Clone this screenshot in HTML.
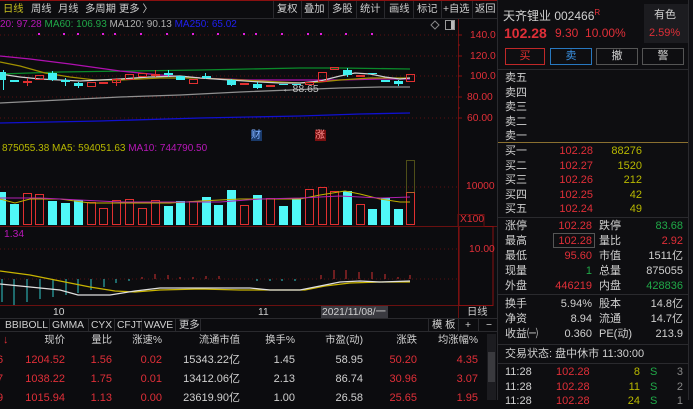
<!DOCTYPE html>
<html><head><meta charset="utf-8">
<style>
*{margin:0;padding:0;box-sizing:border-box}
body{width:693px;height:400px;background:#0c0c0f;overflow:hidden;position:relative;font-family:"Liberation Sans","Noto Sans CJK SC",sans-serif;font-size:11px;color:#d0d0d0}
.a{position:absolute;white-space:nowrap;line-height:13px}
.r{color:#e02f38}.g{color:#20a848}.y{color:#b8b800}.w{color:#d0d0d0}.m{color:#b818b8}
.rt{text-align:right}
.s{font-size:10.3px}
</style></head><body>
<svg class="a" style="left:0;top:0" width="498" height="400">
<rect x="0" y="0" width="498" height="18" fill="#0c0c0f"/>
<line x1="0" y1="0.5" x2="498" y2="0.5" stroke="#8a1010"/>
<line x1="0" y1="18.5" x2="498" y2="18.5" stroke="#2a2a2e"/>
<g stroke="#2a2a2e"><line x1="273.5" y1="1" x2="273.5" y2="18"/><line x1="301.5" y1="1" x2="301.5" y2="18"/><line x1="328.5" y1="1" x2="328.5" y2="18"/><line x1="356.5" y1="1" x2="356.5" y2="18"/><line x1="384.5" y1="1" x2="384.5" y2="18"/><line x1="413.5" y1="1" x2="413.5" y2="18"/><line x1="441.5" y1="1" x2="441.5" y2="18"/><line x1="472.5" y1="1" x2="472.5" y2="18"/></g>
<line x1="458.5" y1="19" x2="458.5" y2="318" stroke="#6a1010"/>
<g stroke="#5a1010" stroke-dasharray="1,3"><line x1="0" y1="35" x2="458" y2="35"/><line x1="0" y1="56" x2="458" y2="56"/><line x1="0" y1="76" x2="458" y2="76"/><line x1="0" y1="97" x2="458" y2="97"/><line x1="0" y1="118" x2="458" y2="118"/><line x1="0" y1="187" x2="458" y2="187"/><line x1="0" y1="249" x2="458" y2="249"/><line x1="0" y1="279" x2="458" y2="279"/></g>
<g stroke="#8a1010"><line x1="458" y1="35" x2="462" y2="35"/><line x1="458" y1="56" x2="462" y2="56"/><line x1="458" y1="76" x2="462" y2="76"/><line x1="458" y1="97" x2="462" y2="97"/><line x1="458" y1="118" x2="462" y2="118"/><line x1="458" y1="45" x2="460" y2="45"/><line x1="458" y1="66" x2="460" y2="66"/><line x1="458" y1="87" x2="460" y2="87"/><line x1="458" y1="108" x2="460" y2="108"/></g>
<line x1="0" y1="226.5" x2="498" y2="226.5" stroke="#6a1010"/>
<line x1="0" y1="305.5" x2="458" y2="305.5" stroke="#6a1010"/>
<rect x="459" y="226.5" width="34" height="79" fill="none" stroke="#8a1010"/>
<rect x="458" y="214.5" width="26" height="12" fill="none" stroke="#6a1010"/>
<line x1="0" y1="318.5" x2="498" y2="318.5" stroke="#2a2a2e"/>
<line x1="0" y1="331.5" x2="498" y2="331.5" stroke="#2a2a2e"/>
<g stroke="#2a2a2e"><line x1="49.5" y1="319" x2="49.5" y2="331"/><line x1="88.5" y1="319" x2="88.5" y2="331"/><line x1="114.5" y1="319" x2="114.5" y2="331"/><line x1="141.5" y1="319" x2="141.5" y2="331"/><line x1="175.5" y1="319" x2="175.5" y2="331"/><line x1="200.5" y1="319" x2="200.5" y2="331"/><line x1="428.5" y1="319" x2="428.5" y2="331"/><line x1="458.5" y1="319" x2="458.5" y2="331"/><line x1="478.5" y1="319" x2="478.5" y2="331"/></g>
<rect x="321" y="306" width="67" height="12" fill="#3a3a40"/>
<g fill="#e020e0"><rect x="38" y="33" width="2" height="2"/><rect x="63" y="33" width="2" height="2"/><rect x="77" y="33" width="2" height="2"/><rect x="102" y="33" width="2" height="2"/><rect x="114" y="33" width="2" height="2"/><rect x="140" y="33" width="2" height="2"/><rect x="166" y="33" width="2" height="2"/><rect x="192" y="33" width="2" height="2"/><rect x="217" y="33" width="2" height="2"/><rect x="243" y="33" width="2" height="2"/><rect x="255" y="33" width="2" height="2"/><rect x="281" y="33" width="2" height="2"/><rect x="307" y="33" width="2" height="2"/><rect x="320" y="33" width="2" height="2"/><rect x="345" y="33" width="2" height="2"/><rect x="371" y="33" width="2" height="2"/></g>
<path d="M435 21 L439 25 L435 29 L431 25Z" fill="none" stroke="#888"/>
<rect x="445.5" y="20.5" width="9" height="9" fill="none" stroke="#999"/><rect x="451" y="21" width="3" height="8" fill="#bbb"/>
<polyline fill="none" stroke="#0a8a2a" stroke-width="1.3" points="0,74 60,72 130,71 200,70 300,68 340,68 410,69"/>
<polyline fill="none" stroke="#b010b0" stroke-width="1.3" points="0,56 30,59 70,64 120,71 160,75 200,78 250,80 300,80 340,80 380,79 410,79"/>
<polyline fill="none" stroke="#a09000" stroke-width="1.3" points="0,62 20,66 45,73 70,77 95,80 120,80 160,78 200,78 240,80 280,82 300,83 320,82 340,80 370,78 410,78"/>
<polyline fill="none" stroke="#d0d0d0" stroke-width="1.2" points="0,74 20,77 40,79 60,80 80,81 100,80 120,79 150,77 180,76 200,78 230,80 260,82 280,83 300,83 320,81 340,76 355,73 370,74 385,77 400,79 410,78"/>
<polyline fill="none" stroke="#909090" stroke-width="1.3" points="0,103 60,100 120,97 180,95 240,92 290,90 340,88 380,87 410,87"/>
<polyline fill="none" stroke="#1010d0" stroke-width="1.3" points="0,123 100,121 200,118 300,116 360,114 410,113"/>
<g fill="#40f0f0">
<rect x="0" y="72" width="6" height="8"/><rect x="10" y="80" width="9" height="2"/><rect x="48" y="73" width="9" height="7"/><rect x="61" y="80" width="9" height="2"/><rect x="74" y="83" width="9" height="3"/><rect x="164" y="73" width="9" height="2"/><rect x="176" y="76" width="9" height="4"/><rect x="202" y="76" width="9" height="2"/><rect x="227" y="80" width="9" height="5"/><rect x="253" y="84" width="9" height="4"/><rect x="279" y="84" width="9" height="1"/><rect x="292" y="84" width="9" height="1"/><rect x="343" y="70" width="9" height="5"/><rect x="368" y="73" width="9" height="1"/><rect x="381" y="80" width="9" height="2"/><rect x="394" y="81" width="9" height="3"/>
<rect x="3" y="70" width="1" height="20"/><rect x="52" y="71" width="1" height="10"/><rect x="65" y="78" width="1" height="8"/><rect x="78" y="82" width="1" height="6"/><rect x="168" y="70" width="1" height="7"/><rect x="205" y="73" width="1" height="6"/><rect x="231" y="79" width="1" height="7"/><rect x="257" y="82" width="1" height="7"/><rect x="347" y="68" width="1" height="9"/><rect x="398" y="80" width="1" height="6"/>
</g>
<g fill="none" stroke="#e03030">
<rect x="23.5" y="81.5" width="8" height="1"/><rect x="35.5" y="75.5" width="8" height="4"/><rect x="87.5" y="82.5" width="8" height="4"/><rect x="99.5" y="82.5" width="8" height="1"/><rect x="112.5" y="79.5" width="8" height="3"/><rect x="125.5" y="74.5" width="8" height="5"/><rect x="138.5" y="73.5" width="8" height="3"/><rect x="151.5" y="74.5" width="8" height="1"/><rect x="189.5" y="79.5" width="8" height="4"/><rect x="240.5" y="83.5" width="8" height="1"/><rect x="266.5" y="85.5" width="8" height="1"/><rect x="305.5" y="82.5" width="8" height="2"/><rect x="318.5" y="72.5" width="8" height="9"/><rect x="330.5" y="67.5" width="8" height="2"/><rect x="356.5" y="75.5" width="8" height="1"/><rect x="406.5" y="74.5" width="8" height="7"/>
<line x1="27.5" y1="78" x2="27.5" y2="86"/><line x1="116.5" y1="78" x2="116.5" y2="86"/><line x1="155.5" y1="70" x2="155.5" y2="77"/>
</g>
<text x="282" y="92" fill="#c0c0c0" font-size="10.5" font-family="Liberation Sans">←88.65</text>
<rect x="251" y="130" width="11" height="11" fill="#1a3a6a"/><rect x="315" y="130" width="11" height="11" fill="#7a1010"/>
<g fill="#50f8f8">
<rect x="0" y="192" width="6" height="33"/><rect x="10" y="204" width="9" height="21"/><rect x="48" y="201" width="9" height="24"/><rect x="61" y="203" width="9" height="22"/><rect x="74" y="200" width="9" height="25"/><rect x="164" y="206" width="9" height="19"/><rect x="176" y="201" width="9" height="24"/><rect x="202" y="197" width="9" height="28"/><rect x="214" y="205" width="9" height="20"/><rect x="227" y="190" width="9" height="35"/><rect x="253" y="195" width="9" height="30"/><rect x="279" y="206" width="9" height="19"/><rect x="292" y="198" width="9" height="27"/><rect x="343" y="191" width="9" height="34"/><rect x="368" y="209" width="9" height="16"/><rect x="381" y="198" width="9" height="27"/><rect x="394" y="209" width="9" height="16"/>
</g>
<g fill="none" stroke="#e03030">
<rect x="23.5" y="193.5" width="8" height="31"/><rect x="35.5" y="194.5" width="8" height="30"/><rect x="87.5" y="202.5" width="8" height="22"/><rect x="99.5" y="208.5" width="8" height="16"/><rect x="112.5" y="200.5" width="8" height="24"/><rect x="125.5" y="199.5" width="8" height="25"/><rect x="138.5" y="208.5" width="8" height="16"/><rect x="151.5" y="200.5" width="8" height="24"/><rect x="189.5" y="201.5" width="8" height="23"/><rect x="240.5" y="205.5" width="8" height="19"/><rect x="266.5" y="198.5" width="8" height="26"/><rect x="305.5" y="189.5" width="8" height="35"/><rect x="318.5" y="187.5" width="8" height="37"/><rect x="330.5" y="191.5" width="8" height="33"/><rect x="356.5" y="204.5" width="8" height="20"/><rect x="406.5" y="192.5" width="8" height="32"/>
</g>
<rect x="406.5" y="160.5" width="8" height="32" fill="none" stroke="#909020" stroke-dasharray="1,1"/>
<polyline fill="none" stroke="#c0b000" points="0,199 15,203 30,199 60,199 90,203 130,203 170,203 200,201 240,199 260,199 300,199 320,195 345,191 360,194 380,199 400,202 410,202"/>
<polyline fill="none" stroke="#b020b0" points="0,198 40,198 80,200 120,202 170,202 220,202 260,199 300,198 340,196 380,198 410,197"/>
<g stroke="#30c8c8"><line x1="2" y1="279" x2="2" y2="302"/><line x1="14" y1="279" x2="14" y2="305"/><line x1="27" y1="279" x2="27" y2="302"/><line x1="40" y1="279" x2="40" y2="299"/><line x1="53" y1="279" x2="53" y2="297"/><line x1="66" y1="279" x2="66" y2="295"/><line x1="78" y1="279" x2="78" y2="293"/><line x1="91" y1="279" x2="91" y2="290"/><line x1="104" y1="279" x2="104" y2="287"/><line x1="116" y1="279" x2="116" y2="283"/><line x1="129" y1="279" x2="129" y2="281"/><line x1="257" y1="279" x2="257" y2="281"/><line x1="270" y1="279" x2="270" y2="281"/><line x1="282" y1="279" x2="282" y2="281"/><line x1="295" y1="279" x2="295" y2="281"/></g>
<g stroke="#d03030"><line x1="142" y1="279" x2="142" y2="277"/><line x1="155" y1="279" x2="155" y2="274"/><line x1="168" y1="279" x2="168" y2="275"/><line x1="180" y1="279" x2="180" y2="277"/><line x1="193" y1="279" x2="193" y2="277"/><line x1="206" y1="279" x2="206" y2="276"/><line x1="219" y1="279" x2="219" y2="276"/><line x1="321" y1="279" x2="321" y2="275"/><line x1="334" y1="279" x2="334" y2="270"/><line x1="346" y1="279" x2="346" y2="270"/><line x1="359" y1="279" x2="359" y2="272"/><line x1="372" y1="279" x2="372" y2="272"/><line x1="385" y1="279" x2="385" y2="274"/><line x1="398" y1="279" x2="398" y2="277"/><line x1="410" y1="279" x2="410" y2="275"/></g>
<polyline fill="none" stroke="#c8b400" stroke-width="1.2" points="0,271 30,275 60,281 90,287 115,291 135,292 160,290 200,289 240,290 280,290 305,290 325,286 350,283 380,282 410,282"/>
<polyline fill="none" stroke="#e0e0e0" stroke-width="1.2" points="0,284 30,287 60,290 78,295 110,295 135,291 160,288 200,288 250,288 270,290 300,290 320,286 340,282 360,281 380,282 410,281"/>
</svg>

<div class="a s" style="left:3px;top:3px;color:#c8c020">日线</div>
<div class="a w s" style="left:31px;top:3px">周线</div>
<div class="a w s" style="left:58px;top:3px">月线</div>
<div class="a w s" style="left:85px;top:3px">多周期</div>
<div class="a w s" style="left:119px;top:3px">更多 〉</div>
<div class="a w s" style="left:277px;top:3px">复权</div>
<div class="a w s" style="left:304px;top:3px">叠加</div>
<div class="a w s" style="left:332px;top:3px">多股</div>
<div class="a w s" style="left:360px;top:3px">统计</div>
<div class="a w s" style="left:389px;top:3px">画线</div>
<div class="a w s" style="left:417px;top:3px">标记</div>
<div class="a w s" style="left:443px;top:3px">+自选</div>
<div class="a w s" style="left:475px;top:3px">返回</div>
<div class="a s" style="left:0;top:18px;font-size:10px"><span class="m">20: 97.28</span> <span class="g">MA60: 106.93</span> <span style="color:#b0b0b0">MA120: 90.13</span> <span style="color:#2020f0">MA250: 65.02</span></div>
<div class="a r s" style="left:470px;top:29px">140.0</div>
<div class="a r s" style="left:470px;top:50px">120.0</div>
<div class="a r s" style="left:470px;top:70px">100.0</div>
<div class="a r s" style="left:467px;top:91px">80.00</div>
<div class="a r s" style="left:467px;top:112px">60.00</div>
<div class="a" style="left:251px;top:129px;color:#80b0ff;font-size:10px">财</div>
<div class="a" style="left:315px;top:129px;color:#ff9090;font-size:10px">涨</div>
<div class="a" style="left:2px;top:142px;font-size:10px"><span class="y">875055.38 MA5: 594051.63</span> <span class="m">MA10: 744790.50</span></div>
<div class="a r s" style="left:466px;top:180px">10000</div>
<div class="a r s" style="left:460px;top:213px">X100</div>
<div class="a m s" style="left:4px;top:228px">1.34</div>
<div class="a r s" style="left:469px;top:243px">10.00</div>
<div class="a w s" style="left:53px;top:306px">10</div>
<div class="a w s" style="left:258px;top:306px">11</div>
<div class="a w s" style="left:322px;top:306px">2021/11/08/一</div>
<div class="a w s" style="left:467px;top:306px">日线</div>
<div class="a w s" style="left:5px;top:319px">BBIBOLL</div>
<div class="a w s" style="left:52px;top:319px">GMMA</div>
<div class="a w s" style="left:91px;top:319px">CYX</div>
<div class="a w s" style="left:117px;top:319px">CFJT</div>
<div class="a w s" style="left:144px;top:319px">WAVE</div>
<div class="a w s" style="left:179px;top:319px">更多</div>
<div class="a w s" style="left:432px;top:319px">模 板</div>
<div class="a w s" style="left:465px;top:319px">+</div>
<div class="a w s" style="left:486px;top:319px">−</div>
<div class="a" style="left:487px;top:334px;width:9px;height:66px;background:#1c1c20"></div>
<div class="a" style="left:488px;top:352px;width:7px;height:30px;background:#3a3a3e"></div>
<div class="a r" style="left:3px;top:334px">↓</div>
<div class="a w rt s" style="left:20px;top:334px;width:45px">现价</div>
<div class="a w rt s" style="left:70px;top:334px;width:42px">量比</div>
<div class="a w rt s" style="left:115px;top:334px;width:47px">涨速%</div>
<div class="a w rt s" style="left:165px;top:334px;width:75px">流通市值</div>
<div class="a w rt s" style="left:245px;top:334px;width:50px">换手%</div>
<div class="a w rt s" style="left:300px;top:334px;width:63px">市盈(动)</div>
<div class="a w rt s" style="left:370px;top:334px;width:47px">涨跌</div>
<div class="a w rt s" style="left:420px;top:334px;width:58px">均涨幅%</div>

<div class="a r" style="left:-3px;top:354px">6</div>
<div class="a r rt" style="left:10px;top:354px;width:55px">1204.52</div>
<div class="a r rt" style="left:70px;top:354px;width:42px">1.56</div>
<div class="a r rt" style="left:115px;top:354px;width:47px">0.02</div>
<div class="a w rt" style="left:165px;top:354px;width:75px">15343.22亿</div>
<div class="a w rt" style="left:245px;top:354px;width:50px">1.45</div>
<div class="a w rt" style="left:300px;top:354px;width:63px">58.95</div>
<div class="a r rt" style="left:370px;top:354px;width:47px">50.20</div>
<div class="a r rt" style="left:420px;top:354px;width:58px">4.35</div>

<div class="a r" style="left:-3px;top:373px">7</div>
<div class="a r rt" style="left:10px;top:373px;width:55px">1038.22</div>
<div class="a r rt" style="left:70px;top:373px;width:42px">1.75</div>
<div class="a r rt" style="left:115px;top:373px;width:47px">0.01</div>
<div class="a w rt" style="left:165px;top:373px;width:75px">13412.06亿</div>
<div class="a w rt" style="left:245px;top:373px;width:50px">2.13</div>
<div class="a w rt" style="left:300px;top:373px;width:63px">86.74</div>
<div class="a r rt" style="left:370px;top:373px;width:47px">30.96</div>
<div class="a r rt" style="left:420px;top:373px;width:58px">3.07</div>

<div class="a r" style="left:-3px;top:392px">9</div>
<div class="a r rt" style="left:10px;top:392px;width:55px">1015.94</div>
<div class="a r rt" style="left:70px;top:392px;width:42px">1.13</div>
<div class="a r rt" style="left:115px;top:392px;width:47px">0.00</div>
<div class="a w rt" style="left:165px;top:392px;width:75px">23619.90亿</div>
<div class="a w rt" style="left:245px;top:392px;width:50px">1.00</div>
<div class="a w rt" style="left:300px;top:392px;width:63px">26.58</div>
<div class="a r rt" style="left:370px;top:392px;width:47px">25.65</div>
<div class="a r rt" style="left:420px;top:392px;width:58px">1.95</div>

<div class="a" style="left:497px;top:0;width:196px;height:400px;background:#0e0e11;border-left:1px solid #2a2a2e"></div>
<div class="a" style="left:688px;top:0;width:5px;height:400px;background:#101014;border-left:1px solid #2a2a2e"></div>
<div class="a w" style="left:503px;top:6px;font-size:12px">天齐锂业 002466<sup style="color:#e8323c;font-size:8px">R</sup></div>
<div class="a" style="left:644px;top:4px;width:44px;height:39px;background:#1c1c20"></div>
<div class="a w" style="left:654px;top:9px">有色</div>
<div class="a r" style="left:649px;top:27px">2.59%</div>
<div class="a r" style="left:504px;top:25px;font-size:14px;font-weight:bold;line-height:16px">102.28</div>
<div class="a r" style="left:555px;top:27px;font-size:12px">9.30&nbsp; 10.00%</div>
<div class="a" style="left:505px;top:48px;width:40px;height:17px;border:1px solid #c02828;color:#e03030;text-align:center;line-height:15px">买</div>
<div class="a" style="left:550px;top:48px;width:42px;height:17px;border:1px solid #2878c0;color:#3a90e0;text-align:center;line-height:15px">卖</div>
<div class="a w" style="left:596px;top:48px;width:42px;height:17px;border:1px solid #555;text-align:center;line-height:15px">撤</div>
<div class="a w" style="left:642px;top:48px;width:42px;height:17px;border:1px solid #555;text-align:center;line-height:15px">警</div>
<div class="a" style="left:498px;top:69px;width:190px;height:1px;background:#2a2a2e"></div>
<div class="a w" style="left:505px;top:71px;line-height:14.6px">卖五<br>卖四<br>卖三<br>卖二<br>卖一</div>
<div class="a" style="left:498px;top:142px;width:190px;height:1px;background:#8a7030"></div>
<div class="a w" style="left:505px;top:144px;line-height:14.6px">买一<br>买二<br>买三<br>买四<br>买五</div>
<div class="a r rt" style="left:540px;top:144px;width:53px;line-height:14.6px">102.28<br>102.27<br>102.26<br>102.25<br>102.24</div>
<div class="a y rt" style="left:600px;top:144px;width:42px;line-height:14.6px">88276<br>1520<br>212<br>42<br>49</div>
<div class="a" style="left:498px;top:217px;width:190px;height:1px;background:#2a2a2e"></div>
<div class="a w" style="left:505px;top:219px;line-height:15px">涨停<br>最高<br>最低<br>现量<br>外盘</div>
<div class="a rt" style="left:540px;top:219px;width:52px;line-height:15px"><span class="r">102.28</span><br><span class="r">102.28</span><br><span class="r">95.60</span><br><span class="g">1</span><br><span class="r">446219</span></div>
<div class="a" style="left:553px;top:233px;width:42px;height:15px;border:1px solid #555"></div>
<div class="a w" style="left:599px;top:219px;line-height:15px">跌停<br>量比<br>市值<br>总量<br>内盘</div>
<div class="a rt" style="left:630px;top:219px;width:53px;line-height:15px"><span class="g">83.68</span><br><span class="r">2.92</span><br><span class="w">1511亿</span><br><span class="w">875055</span><br><span class="g">428836</span></div>
<div class="a" style="left:498px;top:294px;width:190px;height:1px;background:#2a2a2e"></div>
<div class="a w" style="left:505px;top:297px;line-height:15px">换手<br>净资<br>收益㈠</div>
<div class="a w rt" style="left:540px;top:297px;width:52px;line-height:15px">5.94%<br>8.94<br>0.360</div>
<div class="a w" style="left:599px;top:297px;line-height:15px">股本<br>流通<br>PE(动)</div>
<div class="a w rt" style="left:630px;top:297px;width:53px;line-height:15px">14.8亿<br>14.7亿<br>213.9</div>
<div class="a" style="left:498px;top:344px;width:190px;height:1px;background:#2a2a2e"></div>
<div class="a w" style="left:505px;top:348px">交易状态: 盘中休市 11:30:00</div>
<div class="a" style="left:498px;top:363px;width:190px;height:1px;background:#2a2a2e"></div>
<div class="a w" style="left:505px;top:365px;line-height:14.5px">11:28<br>11:28<br>11:28</div>
<div class="a r" style="left:556px;top:365px;line-height:14.5px">102.28<br>102.28<br>102.28</div>
<div class="a y rt" style="left:620px;top:365px;width:20px;line-height:14.5px">8<br>11<br>24</div>
<div class="a g" style="left:650px;top:365px;line-height:14.5px">S<br>S<br>S</div>
<div class="a rt" style="left:670px;top:365px;width:13px;line-height:14.5px;color:#888">3<br>2<br>1</div>
</body></html>
